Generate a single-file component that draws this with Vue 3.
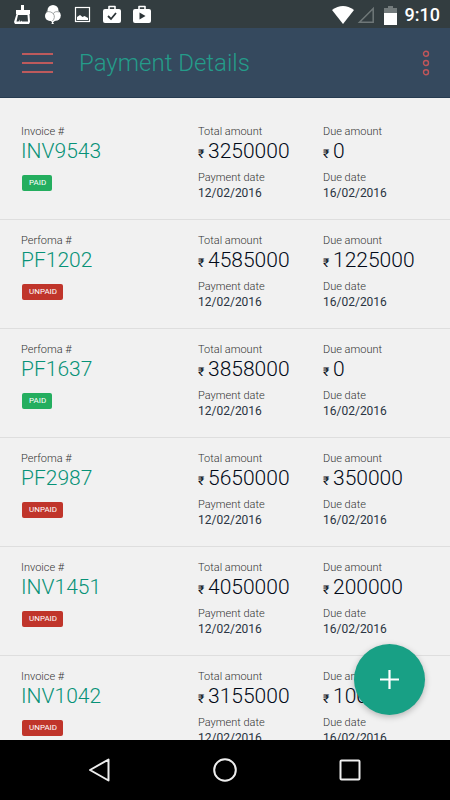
<script setup>
import { ref } from 'vue'

const payments = ref([
  { type: 'Invoice', number: 'INV9543', paid: true, total: '3250000', due: '0' },
  { type: 'Perfoma', number: 'PF1202', paid: false, total: '4585000', due: '1225000' },
  { type: 'Perfoma', number: 'PF1637', paid: true, total: '3858000', due: '0' },
  { type: 'Perfoma', number: 'PF2987', paid: false, total: '5650000', due: '350000' },
  { type: 'Invoice', number: 'INV1451', paid: false, total: '4050000', due: '200000' },
  { type: 'Invoice', number: 'INV1042', paid: false, total: '3155000', due: '100000' },
])

const paymentDate = '12/02/2016'
const dueDate = '16/02/2016'
</script>

<template>
  <div class="screen">
    <div class="status-bar">
      <div class="notifications">
        <!-- cleaner -->
        <svg class="note" viewBox="0 0 20 20">
          <path d="M9 0h3v5h6v4h-.500l.500 8-1 2H3l-1-2L4.500 9H4V5h5z" fill="#fff" />
          <path d="M6 10h9.500l.500 6.500h-6l-.500-1-.500 1H7.500l.500-2-1.500 2H4.500z" fill="#333d40" />
        </svg>
        <!-- balloons -->
        <svg class="note" viewBox="0 0 20 20">
          <circle cx="11" cy="5.500" r="5.500" fill="#fff" />
          <circle cx="8" cy="11" r="5" fill="#fff" />
          <circle cx="13.500" cy="10.500" r="5.300" fill="#fff" />
          <path d="M6 14h9l-4 3.500 1 1.500h-2.500l.500-2z" fill="#fff" />
          <path d="M4 7c3-1 6 0 7.500 2s1 5-1 7M11 9c1-2 3-3 6-2" fill="none" stroke="#8b9190" stroke-width=".8" />
        </svg>
        <!-- picture -->
        <svg class="note" viewBox="0 0 20 20">
          <rect x="3.500" y="2.500" width="14" height="14" fill="none" stroke="#fff" stroke-width="1.200" />
          <path d="M5 15v-3l3-2 2.500 2 2-1 3.500 2v2z" fill="#fff" />
        </svg>
        <!-- bag with tick -->
        <svg class="note" viewBox="0 0 20 20">
          <path d="M7 5V1.500h6V5" fill="none" stroke="#fff" stroke-width="1.600" stroke-linejoin="round" />
          <rect x="1" y="4" width="18" height="14" rx="2" fill="#fff" />
          <path d="M6 11l3 3 5-6" fill="none" stroke="#2b3336" stroke-width="1.800" />
        </svg>
        <!-- bag with play mark -->
        <svg class="note" viewBox="0 0 20 20">
          <path d="M7 5V1.500h6V5" fill="none" stroke="#fff" stroke-width="1.600" stroke-linejoin="round" />
          <rect x="1" y="4" width="18" height="14" rx="2" fill="#fff" />
          <path d="M7.500 7.500v7l6-3.500z" fill="#2b3336" />
        </svg>
      </div>
      <div class="system">
        <svg class="wifi" viewBox="0 0 22 18">
          <path d="M11 18L0 4Q11-4 22 4z" fill="#fff" />
        </svg>
        <svg class="signal" viewBox="0 0 18 18">
          <path d="M16.200 2.500v13.700H2.500z" fill="none" stroke="#6f7778" stroke-width="1.500" />
        </svg>
        <svg class="battery" viewBox="0 0 13 19">
          <path d="M0 2h4V0h5v2h4v6H0z" fill="#737b7c" />
          <path d="M0 7h13v12H0z" fill="#fff" />
        </svg>
        <span class="clock">9:10</span>
      </div>
    </div>

    <header class="app-bar">
      <button class="menu" type="button" aria-label="Menu">
        <span></span>
        <span></span>
        <span></span>
      </button>
      <h1>Payment Details</h1>
      <button class="more" type="button" aria-label="More">
        <svg viewBox="0 0 8 26">
          <g fill="none" stroke="#c0565a" stroke-width="1.400">
            <circle cx="4" cy="3.700" r="2.500" />
            <circle cx="4" cy="13" r="2.500" />
            <circle cx="4" cy="22.300" r="2.500" />
          </g>
        </svg>
      </button>
    </header>

    <main class="content">
      <ul class="list">
        <li v-for="p in payments" :key="p.number" class="row">
          <div class="cell">
            <div class="label">{{ p.type }} #</div>
            <div class="number">{{ p.number }}</div>
            <span class="badge" :class="{ unpaid: !p.paid }">{{ p.paid ? 'PAID' : 'UNPAID' }}</span>
          </div>
          <div class="cell">
            <div class="label">Total amount</div>
            <div class="amount"><span class="currency">₹</span>{{ p.total }}</div>
            <div class="label second">Payment date</div>
            <div class="date">{{ paymentDate }}</div>
          </div>
          <div class="cell">
            <div class="label">Due amount</div>
            <div class="amount"><span class="currency">₹</span>{{ p.due }}</div>
            <div class="label second">Due date</div>
            <div class="date">{{ dueDate }}</div>
          </div>
        </li>
      </ul>
      <button class="fab" type="button" aria-label="Add payment">
        <svg viewBox="0 0 19 19">
          <path d="M9.500 0v19M0 9.500h19" stroke="#fff" stroke-width="2.200" />
        </svg>
      </button>
    </main>

    <nav class="nav-bar">
      <button type="button" aria-label="Back">
        <svg viewBox="0 0 24 24">
          <path d="M20.500 1.500v21L2 12z" fill="none" stroke="#eee" stroke-width="2" stroke-linejoin="round" />
        </svg>
      </button>
      <button type="button" aria-label="Home">
        <svg viewBox="0 0 24 24">
          <circle cx="12" cy="12" r="10.800" fill="none" stroke="#eee" stroke-width="2" />
        </svg>
      </button>
      <button type="button" aria-label="Recent apps">
        <svg viewBox="0 0 24 24">
          <rect x="2.500" y="2.500" width="19" height="19" rx="1" fill="none" stroke="#eee" stroke-width="2" />
        </svg>
      </button>
    </nav>
  </div>
</template>

<style>
body {
  margin: 0;
  background: #f1f1f1;
}
</style>

<style scoped>
.screen {
  display: flex;
  flex-direction: column;
  height: 100vh;
  font-family: Roboto, 'Noto Sans', sans-serif;
  background: #f1f1f1;
}
button {
  padding: 0;
  border: 0;
  background: none;
  cursor: pointer;
}
svg {
  display: block;
}

.status-bar {
  display: flex;
  flex: none;
  justify-content: space-between;
  align-items: center;
  box-sizing: border-box;
  height: 28px;
  padding: 2px 10px 0 12px;
  background: #333d40;
}
.notifications {
  display: flex;
  gap: 10px;
}
.note {
  width: 20px;
  height: 20px;
}
.system {
  display: flex;
  align-items: center;
}
.wifi {
  width: 22px;
  height: 18px;
}
.signal {
  width: 18px;
  height: 18px;
  margin-left: 3px;
}
.battery {
  width: 13px;
  height: 19px;
  margin-left: 9px;
}
.clock {
  margin-left: 8px;
  font-size: 18px;
  line-height: 26px;
  font-weight: 500;
  color: #fff;
}

.app-bar {
  display: flex;
  flex: none;
  align-items: center;
  box-sizing: border-box;
  height: 70px;
  padding: 0 20px 0 22px;
  border-bottom: 1px solid #263b50;
  background: #35495e;
}
.menu {
  display: flex;
  flex-direction: column;
  gap: 7px;
  width: 31px;
}
.menu span {
  height: 2px;
  background: #bd5a5c;
}
.app-bar h1 {
  flex: 1;
  margin: 0 0 0 26px;
  font-size: 24px;
  line-height: 32px;
  font-weight: 300;
  color: #249c8a;
}
.more svg {
  width: 8px;
  height: 26px;
}

.content {
  position: relative;
  flex: 1;
  min-height: 0;
  overflow: hidden;
}
.list {
  box-sizing: border-box;
  height: 100%;
  margin: 0;
  padding: 13px 0 0;
  overflow-y: auto;
  scrollbar-width: none;
  list-style: none;
}
.row {
  display: grid;
  grid-template-columns: 177fr 125fr 106fr;
  box-sizing: border-box;
  height: 109px;
  padding: 14px 21px 0;
  border-bottom: 1px solid #dedede;
}
.label {
  font-size: 11px;
  line-height: 14px;
  font-weight: 300;
  color: #333;
}
.number,
.amount {
  font-size: 21px;
  line-height: 24px;
  font-weight: 300;
}
.number {
  color: #079277;
}
.amount {
  color: #020a18;
  white-space: nowrap;
}
.currency {
  display: inline-block;
  width: 10px;
  font-size: 12px;
  font-weight: 400;
}
.label.second {
  margin-top: 5px;
}
.date {
  font-size: 12px;
  line-height: 16px;
  font-weight: 400;
  color: #2a3442;
}
.badge {
  display: inline-block;
  margin: 12px 0 0 1px;
  padding: 0 6px 0 7px;
  border-radius: 2px;
  background: #24ae5f;
  font-size: 8px;
  line-height: 16px;
  color: #fff;
}
.badge.unpaid {
  background: #c0352b;
}

.fab {
  position: absolute;
  right: 25px;
  bottom: 25px;
  display: flex;
  align-items: center;
  justify-content: center;
  width: 71px;
  height: 71px;
  border-radius: 50%;
  background: #18a085;
  box-shadow: 0 2px 6px rgba(0, 0, 0, 0.25);
}
.fab svg {
  width: 19px;
  height: 19px;
}

.nav-bar {
  display: flex;
  flex: none;
  justify-content: center;
  align-items: center;
  gap: 101px;
  height: 60px;
  background: #000;
}
.nav-bar svg {
  width: 24px;
  height: 24px;
}
</style>
